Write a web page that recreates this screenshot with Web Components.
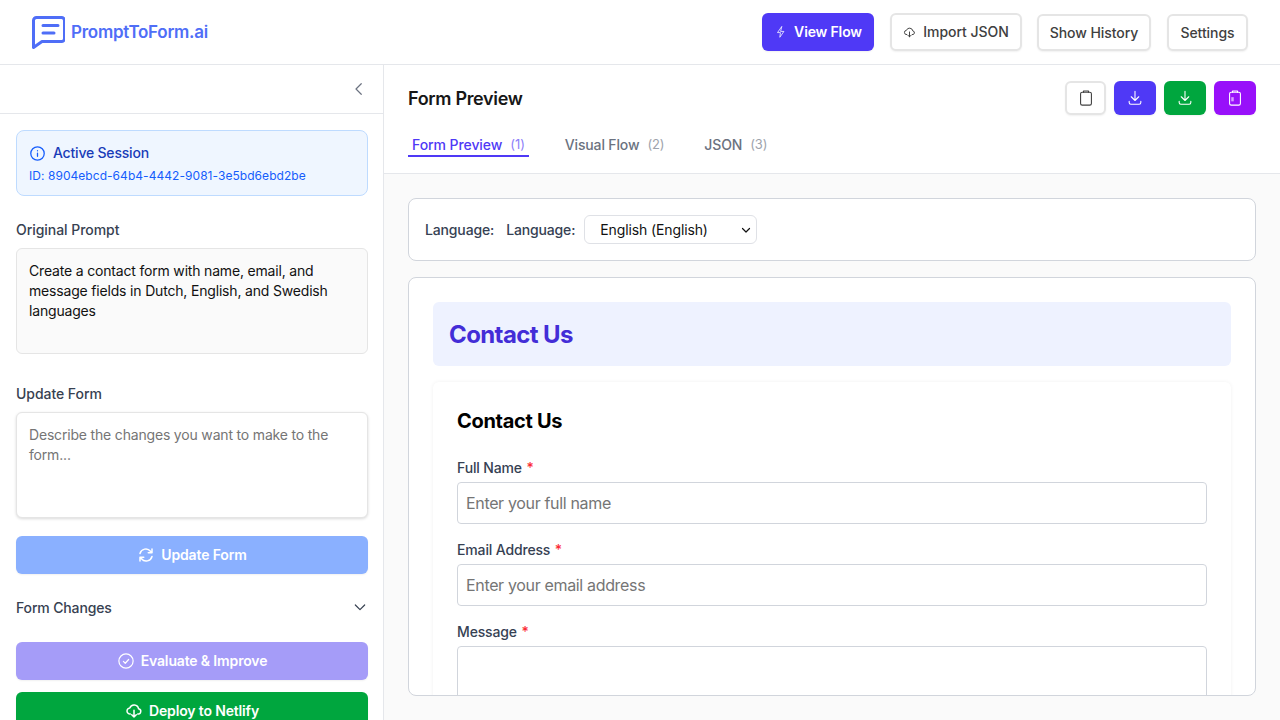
<!DOCTYPE html>
<html lang="en">
<head>
<meta charset="utf-8">
<title>PromptToForm.ai</title>
<style>
html, body { margin: 0; height: 100%; overflow: hidden; }
body { font-family: Inter, "Liberation Sans", sans-serif; background: #fff; }
</style>
</head>
<body>
<app-shell>
    <top-bar slot="top"></top-bar>
    <side-panel slot="side"></side-panel>
    <preview-pane slot="main"></preview-pane>
</app-shell>

<script>
"use strict"
const ICONS = {
    bolt: '<path d="M13 3 6 13h5l-1 8 7-10h-5z"/>',
    cloud: '<path d="M7 16a4 4 0 0 1-.6-8A6 6 0 0 1 18 9a3.5 3.5 0 0 1-1 7"/><path d="M12 11v9m-3-3 3 3 3-3"/>',
    chevronLeft: '<path d="m15 5-7 7 7 7"/>',
    chevronDown: '<path d="m5 9 7 7 7-7"/>',
    info: '<circle cx="12" cy="12" r="9.5"/><path d="M12 11.5V16M12 8v.2"/>',
    refresh: '<path d="M4 10a8 8 0 0 1 14-3l2 2M20 4v5h-5M20 14a8 8 0 0 1-14 3l-2-2M4 20v-5h5"/>',
    check: '<circle cx="12" cy="12" r="9.5"/><path d="m8.5 12.5 2.5 2.5 4.5-5"/>',
    clipboard: '<rect x="5.5" y="5" width="13" height="15.5" rx="2"/><path d="M9 5V3.5h6V5"/>',
    download: '<path d="M12 4v11m-4.500-4.500 4.500 4.500 4.500-4.500M5 16v1.500a2 2 0 0 0 2 2h10a2 2 0 0 0 2-2V16"/>',
    clipboardCode: '<rect x="5.500" y="5" width="13" height="15.500" rx="2"/><path d="M9 5V3.500h6V5"/><path d="M9 11v5" stroke-opacity=".6" stroke-width="3" stroke-linecap="butt"/>'
};

function icon(name, size, width = 2){
    return `<svg width="${size}" height="${size}" viewBox="0 0 24 24" fill="none" stroke="currentColor" stroke-width="${width}" stroke-linecap="round" stroke-linejoin="round" aria-hidden="true">${ICONS[name]}</svg>`;
}

class AppShell extends HTMLElement{
    constructor(){
        super();
        this.attachShadow({mode: "open"});
    }

    connectedCallback(){
        this.shadowRoot.innerHTML = `
        <style>
        :host{ display: grid; grid-template: 65px 655px / 384px 896px; height: 720px; overflow: hidden; }
        .top{ grid-column: 1 / 3; display: block; }
        </style>
        <div class="top"><slot name="top"></slot></div>
        <slot name="side"></slot>
        <slot name="main"></slot>`;
    }
}

class ActionButton extends HTMLElement{
    constructor(){
        super();
        this.attachShadow({mode: "open"});
    }

    connectedCallback(){
        const ic = this.getAttribute('icon');
        const size = this.getAttribute('icon-size') || 18;
        this.shadowRoot.innerHTML = `
        <style>
        :host{ display: block; }
        button{
            font: 500 14px/20px Inter, "Liberation Sans", sans-serif;
            letter-spacing: -.05px; white-space: nowrap;
            display: flex; align-items: center; justify-content: center; gap: var(--gap, 6px);
            box-sizing: border-box; width: 100%; height: var(--h, 38px); padding: 0 var(--px, 4px);
            border-radius: 6px; border: 2px solid #e5e5e5; background: #fff; color: #404040;
            box-shadow: 0 1px 2px rgba(0,0,0,.06);
        }
        :host([tone]) button{ border: 0; color: #fff; font-weight: 600; letter-spacing: -.15px; }
        :host([tone="indigo"]) button{ background: #4f39f6; }
        :host([tone="green"]) button{ background: #00a63e; }
        :host([tone="purple"]) button{ background: #9810fa; }
        :host([tone="blue-soft"]) button{ background: #8ab0ff; }
        :host([tone="indigo-soft"]) button{ background: #a59cf8; }
        svg{ flex: none; }
        </style>
        <button type="button">${ic ? icon(ic, size, this.getAttribute('icon-width') || 2) : ''}<slot></slot></button>`;
    }
}

class TopBar extends HTMLElement{
    constructor(){
        super();
        this.attachShadow({mode: "open"});
    }

    connectedCallback(){
        this.shadowRoot.innerHTML = `
        <style>
        :host{ display: flex; align-items: center; box-sizing: border-box; height: 65px; padding: 0 32px; border-bottom: 1px solid #e5e7eb; background: #fff; }
        .logo{ display: flex; align-items: center; gap: 6px; color: #4f6ef7; font: 600 17px/28px Inter, "Liberation Sans", sans-serif; letter-spacing: -.27px; margin-right: auto; }
        .logo svg{ display: block; }
        nav{ display: flex; align-items: center; gap: 16px; }
        .view{ width: 112px; }
        .import{ width: 132px; }
        .history{ width: 114px; margin: 1px 0 0 -1px; }
        .settings{ width: 81px; margin-top: 1px; }
        </style>
        <div class="logo">
            <svg width="33" height="33" viewBox="0 0 33 33" fill="none" stroke="#4f6ef7" stroke-width="3" stroke-linejoin="round" stroke-linecap="round"><path d="M1.500 4.500a3 3 0 0 1 3-3h25a3 3 0 0 1 3 3v18a3 3 0 0 1-3 3H10L1.500 31.500z"/><path d="M11 9.500h15M11 17h11"/></svg>
            <span>PromptToForm.ai</span>
        </div>
        <nav>
            <action-button class="view" tone="indigo" icon="bolt" icon-size="14" icon-width="1.300">View Flow</action-button>
            <action-button class="import" icon="cloud" icon-size="13" icon-width="1.800" style="--gap:7px">Import JSON</action-button>
            <action-button class="history" style="--h:37px">Show History</action-button>
            <action-button class="settings" style="--h:37px">Settings</action-button>
        </nav>`;
    }
}

class SessionCard extends HTMLElement{
    constructor(){
        super();
        this.attachShadow({mode: "open"});
    }

    connectedCallback(){
        this.shadowRoot.innerHTML = `
        <style>
        :host{ display: block; box-sizing: border-box; height: 66px; padding: 12px 12px; border: 1px solid #bedbff; border-radius: 8px; background: #eff6ff; }
        .title{ display: flex; align-items: center; gap: 7px; color: #193cb8; font-size: 14px; line-height: 20px; font-weight: 500; letter-spacing: -.2px; }
        .title svg{ color: #155dfc; }
        .id{ color: #155dfc; font-size: 12px; line-height: 16px; margin-top: 5px; letter-spacing: .05px; }
        </style>
        <div class="title">${icon('info', 17, 1.800)}<span>Active Session</span></div>
        <div class="id"><slot></slot></div>`;
    }
}

class SidePanel extends HTMLElement{
    constructor(){
        super();
        this.attachShadow({mode: "open"});
    }

    connectedCallback(){
        this.shadowRoot.innerHTML = `
        <style>
        :host{ display: block; box-sizing: border-box; height: 655px; overflow: hidden; border-right: 1px solid #e5e7eb; background: #fff; }
        .collapse{ display: flex; align-items: center; justify-content: flex-end; box-sizing: border-box; height: 49px; padding-right: 15px; border-bottom: 1px solid #e5e7eb; color: #6b7280; }
        .body{ padding: 16px 15px 16px 16px; display: flex; flex-direction: column; }
        .label{ color: #374151; font-size: 14px; line-height: 20px; font-weight: 500; margin-bottom: 8px; letter-spacing: -.05px; }
        .prompt{ box-sizing: border-box; height: 106px; padding: 12px; border: 1px solid #e5e5e5; border-radius: 6px; background: #fafafa; color: #111; font-size: 14px; line-height: 20px; letter-spacing: -.18px; margin-bottom: 30px; }
        .update{ box-sizing: border-box; height: 106px; padding: 12px; border: 1px solid #e5e5e5; border-radius: 6px; background: #fff; color: #757575; font-size: 14px; line-height: 20px; letter-spacing: -.18px; box-shadow: 0 1px 3px rgba(0,0,0,.15); margin-bottom: 18px; }
        .changes{ display: flex; align-items: center; justify-content: space-between; height: 20px; margin: 23px 0 25px; color: #374151; font-size: 14px; font-weight: 500; letter-spacing: -.15px; }
        .changes svg{ color: #374151; }
        .deploy{ margin-top: 12px; }
        </style>
        <div class="collapse">${icon('chevronLeft', 18, 1.600)}</div>
        <div class="body">
            <session-card style="margin-bottom:24px">ID: 8904ebcd-64b4-4442-9081-3e5bd6ebd2be</session-card>
            <div class="label">Original Prompt</div>
            <div class="prompt">Create a contact form with name, email, and message fields in Dutch, English, and Swedish languages</div>
            <div class="label">Update Form</div>
            <div class="update">Describe the changes you want to make to the form...</div>
            <action-button tone="blue-soft" icon="refresh">Update Form</action-button>
            <div class="changes"><span>Form Changes</span>${icon('chevronDown', 16, 1.800)}</div>
            <action-button tone="indigo-soft" icon="check" icon-width="1.600">Evaluate &amp; Improve</action-button>
            <action-button class="deploy" tone="green" icon="cloud">Deploy to Netlify</action-button>
        </div>`;
    }
}

class TabItem extends HTMLElement{
    constructor(){
        super();
        this.attachShadow({mode: "open"});
    }

    connectedCallback(){
        this.shadowRoot.innerHTML = `
        <style>
        :host{ display: flex; align-items: center; gap: 8px; box-sizing: border-box; height: 24px; padding: 0 4px; color: #6b7280; font-size: 14px; font-weight: 500; letter-spacing: -.15px; border-bottom: 2px solid transparent; }
        :host([active]){ color: #4f39f6; border-bottom-color: #4f39f6; letter-spacing: -.08px; }
        .n{ font-size: 13px; font-weight: 400; opacity: .65; }
        </style>
        <slot></slot><span class="n">(${this.getAttribute('n')})</span>`;
    }
}

class FormField extends HTMLElement{
    constructor(){
        super();
        this.attachShadow({mode: "open"});
    }

    connectedCallback(){
        const h = this.getAttribute('height') || 42;
        this.shadowRoot.innerHTML = `
        <style>
        :host{ display: block; margin-bottom: 16px; }
        .label{ color: #364153; font-size: 14px; line-height: 20px; font-weight: 500; letter-spacing: -.15px; margin-bottom: 4px; }
        .req{ color: #fb2c36; margin-left: 1px; }
        .input{ box-sizing: border-box; height: ${h}px; padding: 0 8px; display: flex; align-items: center; border: 1px solid #d1d5dc; border-radius: 4px; background: #fff; color: #757575; font-size: 16px; letter-spacing: -.34px; }
        </style>
        <div class="label"><slot></slot> <span class="req">*</span></div>
        <div class="input">${this.getAttribute('placeholder') || ''}</div>`;
    }
}

class ContactForm extends HTMLElement{
    constructor(){
        super();
        this.attachShadow({mode: "open"});
    }

    connectedCallback(){
        this.shadowRoot.innerHTML = `
        <style>
        :host{ display: block; box-sizing: border-box; height: 419px; padding: 24px; overflow: hidden; border: 1px solid #d1d5dc; border-radius: 8px; background: #fff; }
        .banner{ display: flex; align-items: center; box-sizing: border-box; height: 64px; padding: 0 16px; border-radius: 6px; background: #eef2ff; color: #432dd7; font-size: 24px; font-weight: 700; letter-spacing: -.6px; margin-bottom: 16px; }
        .card{ padding: 24px; border-radius: 6px; background: #fff; box-shadow: 0 0 4px rgba(0,0,0,.06); }
        h2{ margin: 0 0 22px; color: #000; font-size: 20px; line-height: 30px; font-weight: 700; letter-spacing: -.3px; }
        </style>
        <div class="banner">Contact Us</div>
        <div class="card">
            <h2>Contact Us</h2>
            <form-field placeholder="Enter your full name">Full Name</form-field>
            <form-field placeholder="Enter your email address">Email Address</form-field>
            <form-field height="120">Message</form-field>
        </div>`;
    }
}

class PreviewPane extends HTMLElement{
    constructor(){
        super();
        this.attachShadow({mode: "open"});
    }

    connectedCallback(){
        this.shadowRoot.innerHTML = `
        <style>
        :host{ display: flex; flex-direction: column; height: 655px; overflow: hidden; background: #fafafa; }
        header{ box-sizing: border-box; height: 109px; padding: 16px 24px 0; background: #fff; border-bottom: 1px solid #e5e7eb; }
        .row{ display: flex; align-items: center; justify-content: space-between; height: 34px; }
        h1{ margin: 2px 0 0; color: #171717; font-size: 18px; line-height: 28px; font-weight: 600; letter-spacing: -.33px; }
        .tools{ display: flex; gap: 8px; }
        .tools action-button{ width: 42px; --h: 34px; --px: 0; }
        .tools action-button:first-child{ width: 41px; }
        .tabs{ display: flex; gap: 32px; margin-top: 18px; }
        .content{ flex: 1; padding: 24px; display: flex; flex-direction: column; gap: 16px; }
        .lang{ display: flex; align-items: center; gap: 12px; box-sizing: border-box; height: 63px; padding: 0 16px; border: 1px solid #d1d5dc; border-radius: 8px; background: #fff; color: #364153; font-size: 14px; font-weight: 500; letter-spacing: -.15px; }
        .select{ display: flex; align-items: center; justify-content: space-between; box-sizing: border-box; width: 173px; height: 29px; margin-left: -3px; padding: 0 4px 0 15px; border: 1px solid #dfe1e6; border-radius: 6px; color: #111; font-weight: 400; letter-spacing: -.12px; }
        .select svg{ color: #111; }
        </style>
        <header>
            <div class="row">
                <h1>Form Preview</h1>
                <div class="tools">
                    <action-button icon="clipboard" icon-size="20" icon-width="1.300" aria-label="Copy"></action-button>
                    <action-button tone="indigo" icon="download" icon-size="20" icon-width="1.300" aria-label="Download"></action-button>
                    <action-button tone="green" icon="download" icon-size="20" icon-width="1.300" aria-label="Download for deploy"></action-button>
                    <action-button tone="purple" icon="clipboardCode" icon-size="20" icon-width="1.300" aria-label="Copy code"></action-button>
                </div>
            </div>
            <div class="tabs">
                <tab-item active n="1">Form Preview</tab-item>
                <tab-item n="2">Visual Flow</tab-item>
                <tab-item n="3">JSON</tab-item>
            </div>
        </header>
        <div class="content">
            <div class="lang">
                <span>Language:</span><span>Language:</span>
                <div class="select"><span>English (English)</span>${icon('chevronDown', 12, 2.400)}</div>
            </div>
            <contact-form></contact-form>
        </div>`;
    }
}

customElements.define('action-button', ActionButton);
customElements.define('session-card', SessionCard);
customElements.define('tab-item', TabItem);
customElements.define('form-field', FormField);
customElements.define('contact-form', ContactForm);
customElements.define('top-bar', TopBar);
customElements.define('side-panel', SidePanel);
customElements.define('preview-pane', PreviewPane);
customElements.define('app-shell', AppShell);
</script>
</body>
</html>
